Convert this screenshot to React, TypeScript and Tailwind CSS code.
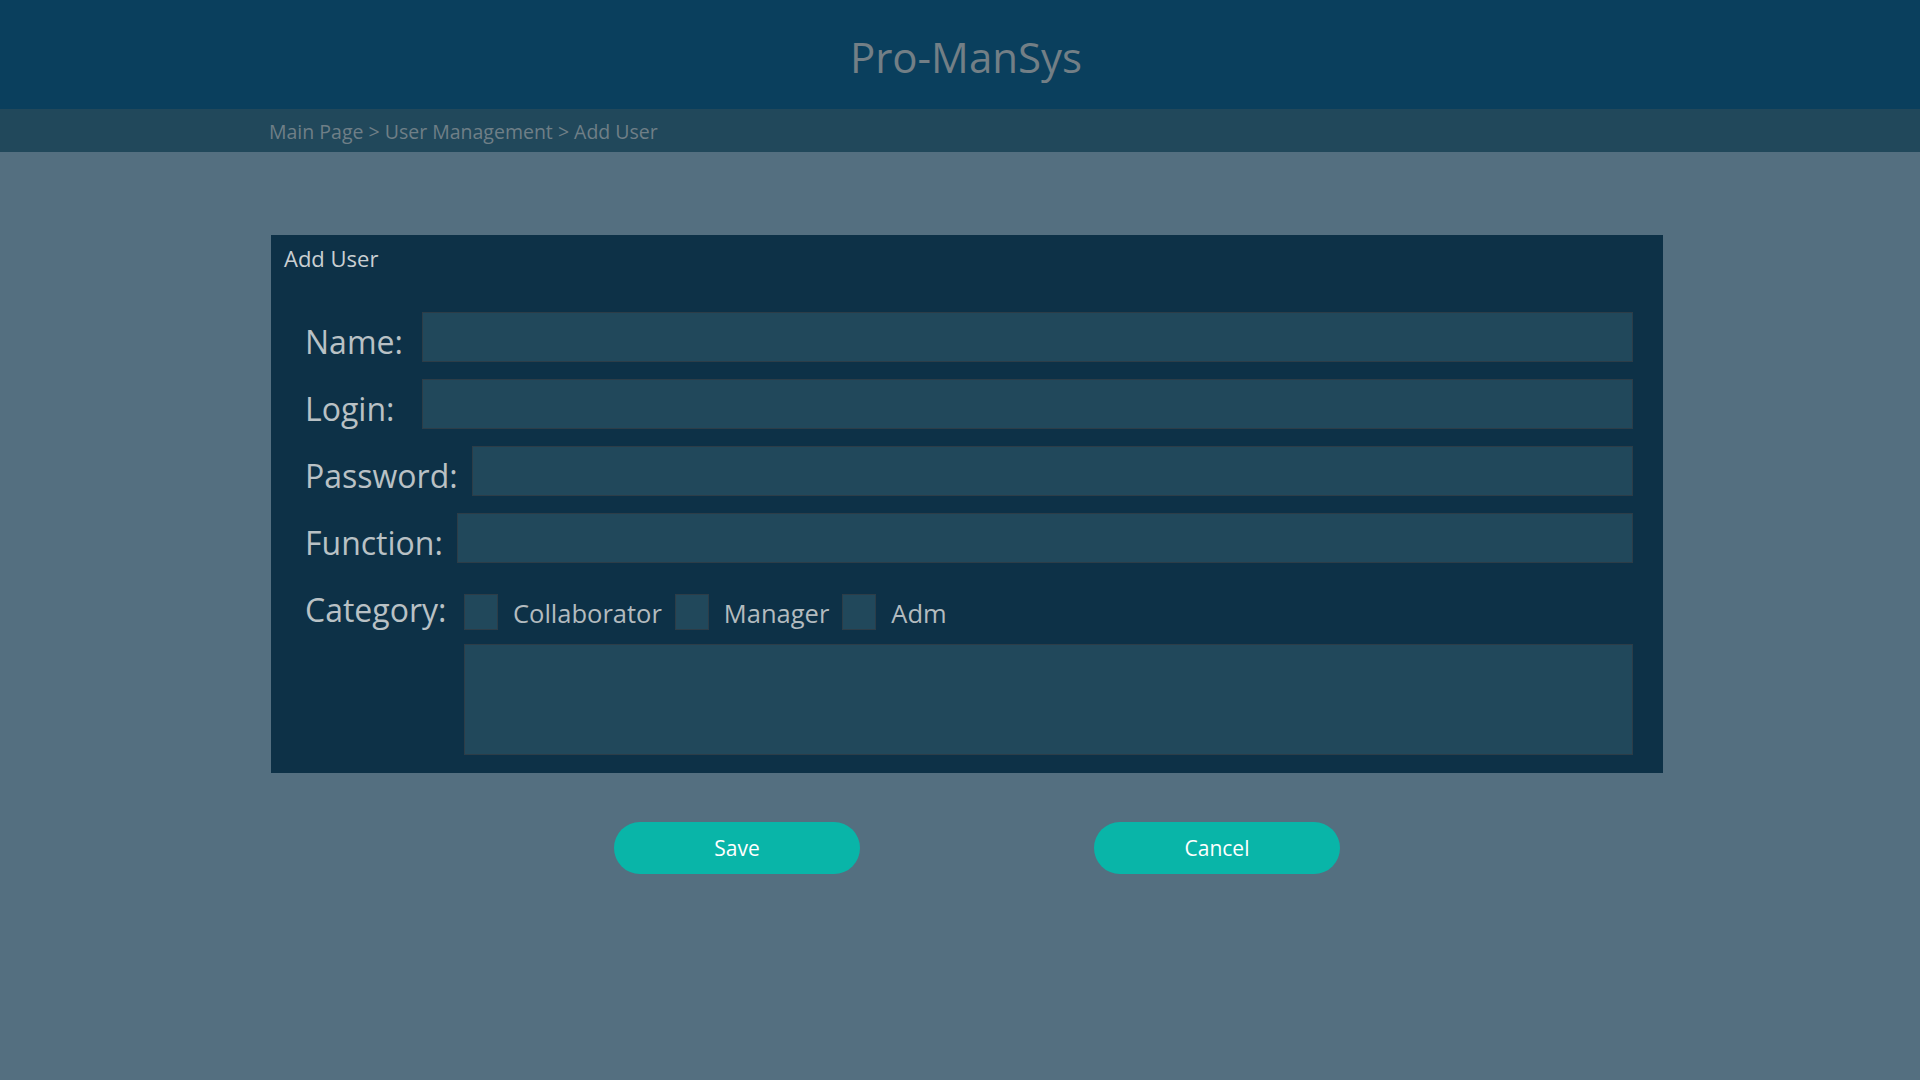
const font = { fontFamily: '"Open Sans", "Noto Sans", sans-serif' }

function Field({ label, labelWidth }: { label: string; labelWidth: string }) {
  return (
    <div className="flex items-end">
      <label className={`${labelWidth} shrink-0 pb-[4px] text-[32px] leading-[33px] text-[#b9c1c5]`}>{label}</label>
      <input
        type="text"
        className="h-[50px] flex-1 border border-[#2c3d48] bg-[#21485b] px-3 text-[22px] text-[#d0d6d9] outline-none"
      />
    </div>
  )
}

function Check({ label }: { label: string }) {
  return (
    <label className="flex items-end">
      <input type="checkbox" className="peer sr-only" />
      <span className="h-[36px] w-[34px] shrink-0 border border-[#2c3d48] bg-[#21485b]"></span>
      <span className="ml-[15px] pb-[4px] text-[25.5px] leading-[26px] text-[#b3bbbf]">{label}</span>
    </label>
  )
}

export default function App() {
  return (
    <div className="flex min-h-screen flex-col bg-[#546f80]" style={font}>
      <header className="flex h-[109px] items-center justify-center bg-[#0a3f5d] pl-[12px] pt-[4px]">
        <h1 className="text-[42px] leading-none text-[#737f86]">Pro-ManSys</h1>
      </header>

      <nav className="flex h-[43px] items-center bg-[#21485b] pl-[269px] pt-[2px] text-[19.5px] text-[#6f7f87]">
        Main Page &gt; User Management &gt; Add User
      </nav>

      <main className="flex-1">
        <section className="ml-[271px] mt-[83px] w-[1392px] bg-[#0d3147] pb-[18px] pl-[13px] pr-[30px] pt-[8px]">
          <h2 className="text-[22px] leading-[30px] text-[#c9cfd2]">Add User</h2>

          <div className="mt-[39px] flex flex-col gap-[17px] pl-[21px]">
            <Field label="Name:" labelWidth="w-[117px]" />
            <Field label="Login:" labelWidth="w-[117px]" />
            <Field label="Password:" labelWidth="w-[167px]" />
            <Field label="Function:" labelWidth="w-[152px]" />
          </div>

          <div className="mt-[30px] flex items-end pl-[21px]">
            <span className="w-[159px] shrink-0 pb-[4px] text-[32px] leading-[33px] text-[#b9c1c5]">Category:</span>
            <div className="flex items-end gap-[13px]">
              <Check label="Collaborator" />
              <Check label="Manager" />
              <Check label="Adm" />
            </div>
          </div>

          <div className="mt-[14px] pl-[180px]">
            <textarea className="block h-[111px] w-full resize-none border border-[#2c3d48] bg-[#21485b] p-3 text-[20px] text-[#d0d6d9] outline-none"></textarea>
          </div>
        </section>

        <div className="ml-[614px] mt-[49px] flex gap-[234px]">
          <button className="h-[52px] w-[246px] rounded-full bg-[#09b5a8] pt-[2px] text-[21px] text-white">Save</button>
          <button className="h-[52px] w-[246px] rounded-full bg-[#09b5a8] pt-[2px] text-[21px] text-white">Cancel</button>
        </div>
      </main>
    </div>
  )
}
